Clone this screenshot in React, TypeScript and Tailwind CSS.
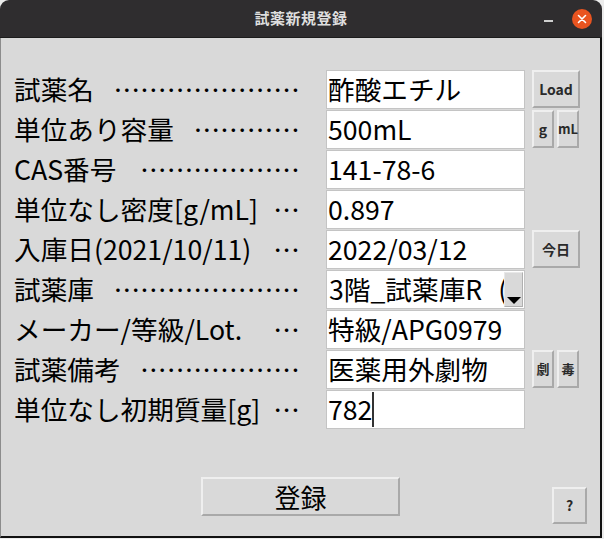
import React from "react";

const rows: { label: string; dots: number; value: string }[] = [
  { label: "試薬名", dots: 7, value: "酢酸エチル" },
  { label: "単位あり容量", dots: 4, value: "500mL" },
  { label: "CAS番号", dots: 6, value: "141-78-6" },
  { label: "単位なし密度[g/mL]", dots: 1, value: "0.897" },
  { label: "入庫日(2021/10/11)", dots: 1, value: "2022/03/12" },
  { label: "試薬庫", dots: 7, value: "3階_試薬庫R" },
  { label: "メーカー/等級/Lot.", dots: 1, value: "特級/APG0979" },
  { label: "試薬備考", dots: 6, value: "医薬用外劇物" },
  { label: "単位なし初期質量[g]", dots: 1, value: "782" },
];

const btn =
  "flex items-center justify-center bg-[#d9d9d9] border-2 border-t-[#efefef] border-l-[#efefef] border-r-[#a9a9a9] border-b-[#a9a9a9] text-[#2a2a2a] font-bold";

function Side({ i }: { i: number }) {
  if (i === 0)
    return <div className={`${btn} w-[48px] h-[38px] text-[14px]`}>Load</div>;
  if (i === 1)
    return (
      <div className="flex gap-[3px]">
        <div className={`${btn} w-[22px] h-[38px] text-[14px]`}>g</div>
        <div className={`${btn} w-[22px] h-[38px] text-[13px]`}>mL</div>
      </div>
    );
  if (i === 4)
    return <div className={`${btn} w-[48px] h-[38px] text-[14px]`}>今日</div>;
  if (i === 7)
    return (
      <div className="flex gap-[3px]">
        <div className={`${btn} w-[22px] h-[38px] text-[13px]`}>劇</div>
        <div className={`${btn} w-[22px] h-[38px] text-[13px]`}>毒</div>
      </div>
    );
  return null;
}

export default function App() {
  return (
    <div className="w-[604px] h-[539px] bg-[#ececec] font-['Noto_Sans_CJK_JP',sans-serif]">
      <div className="w-[602px] h-[538px] flex flex-col">
        {/* title bar */}
        <div className="relative h-[38px] bg-[#2f2d2f] rounded-t-[9px] border-b border-[#1c1c1c] flex items-center justify-center">
          <span className="text-[15px] font-bold text-[#dedede] tracking-[0.5px]">試薬新規登録</span>
          <div className="absolute left-[544px] top-[20px] w-[9px] h-[2px] bg-[#cfcfcf]" />
          <div className="absolute left-[572px] top-[9px] w-[20px] h-[20px] rounded-full bg-[#e95420] flex items-center justify-center">
            <svg width="10" height="10" viewBox="0 0 10 10">
              <path d="M1.5 1.5 L8.5 8.5 M8.5 1.5 L1.5 8.5" stroke="#fff" strokeWidth="1.6" strokeLinecap="round" />
            </svg>
          </div>
        </div>
        {/* body */}
        <div className="flex-1 bg-[#d9d9d9] border-l border-l-[#8c8c8c] border-r-2 border-r-[#111] border-b-2 border-b-[#111] pt-[32px] flex flex-col">
          {rows.map((r, i) => (
            <div key={i} className="flex h-[40px] items-start pl-[13px]">
              <div className="w-[286px] h-[39px] flex items-center justify-between text-[26.67px] leading-none text-black whitespace-pre">
                <span>{r.label}</span>
                <span>{"…".repeat(r.dots)}</span>
              </div>
              <div className="ml-[26px] w-[199px] h-[39px] bg-white border border-[#c4c4c4] flex items-stretch text-[26.67px] leading-none text-black">
                {i === 5 ? (
                  <>
                    <div className="flex-1 overflow-hidden whitespace-pre flex items-center pl-[2px]">
                      <span>{r.value}</span>
                      <span className="ml-[16px]">(冷蔵)</span>
                    </div>
                    <div className="w-[19px] my-[1px] mr-[1px] bg-[#d9d9d9] border border-t-[#e8e8e8] border-l-[#e8e8e8] border-r-[#b0b0b0] border-b-[#b0b0b0] flex items-end justify-center pb-[2px]">
                      <svg width="14" height="7" viewBox="0 0 14 7">
                        <path d="M0 0 L14 0 L7 7 Z" fill="#000" />
                      </svg>
                    </div>
                  </>
                ) : (
                  <div className="flex items-center pl-[1px] whitespace-pre">
                    <span>{r.value}</span>
                    {i === 8 && <span className="self-stretch w-[1.5px] bg-[#333] my-[1px]" />}
                  </div>
                )}
              </div>
              <div className="ml-[7px]">
                <Side i={i} />
              </div>
            </div>
          ))}
          <div className="flex items-start mt-[47px] pl-[200px]">
            <div className={`${btn} w-[199px] h-[39px] text-[26px] !font-normal text-black`}>登録</div>
            <div className={`${btn} ml-[152px] mt-[10px] w-[35px] h-[37px] text-[14px]`}>?</div>
          </div>
        </div>
      </div>
    </div>
  );
}
